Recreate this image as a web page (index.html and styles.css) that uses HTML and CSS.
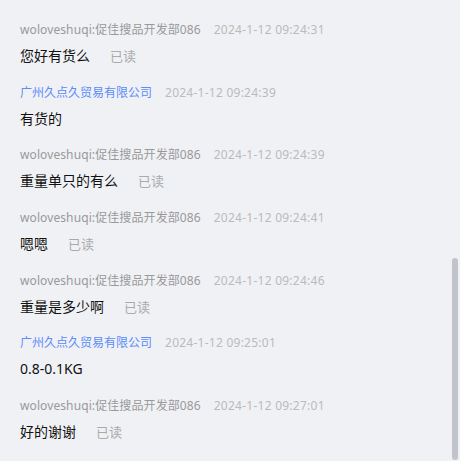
FILE: index.html
```html
<!DOCTYPE html>
<html lang="zh-CN">
<head>
    <meta charset="UTF-8">
    <meta name="viewport" content="width=device-width, initial-scale=1.0">
    <title>聊天记录</title>
    <link rel="stylesheet" href="styles.css">
</head>
<body>
    <!-- Chat history -->
    <div class="chat-list">
        <div class="msg">
            <div class="msg-head"><span class="msg-name">woloveshuqi:促佳搜品开发部086</span><span class="msg-time">2024-1-12 09:24:31</span></div>
            <div class="msg-body">您好有货么<span class="msg-read">已读</span></div>
        </div>
        <div class="msg">
            <div class="msg-head"><span class="msg-name mine">广州久点久贸易有限公司</span><span class="msg-time">2024-1-12 09:24:39</span></div>
            <div class="msg-body">有货的</div>
        </div>
        <div class="msg">
            <div class="msg-head"><span class="msg-name">woloveshuqi:促佳搜品开发部086</span><span class="msg-time">2024-1-12 09:24:39</span></div>
            <div class="msg-body">重量单只的有么<span class="msg-read">已读</span></div>
        </div>
        <div class="msg">
            <div class="msg-head"><span class="msg-name">woloveshuqi:促佳搜品开发部086</span><span class="msg-time">2024-1-12 09:24:41</span></div>
            <div class="msg-body">嗯嗯<span class="msg-read">已读</span></div>
        </div>
        <div class="msg">
            <div class="msg-head"><span class="msg-name">woloveshuqi:促佳搜品开发部086</span><span class="msg-time">2024-1-12 09:24:46</span></div>
            <div class="msg-body">重量是多少啊<span class="msg-read">已读</span></div>
        </div>
        <div class="msg">
            <div class="msg-head"><span class="msg-name mine">广州久点久贸易有限公司</span><span class="msg-time">2024-1-12 09:25:01</span></div>
            <div class="msg-body">0.8-0.1KG</div>
        </div>
        <div class="msg">
            <div class="msg-head"><span class="msg-name">woloveshuqi:促佳搜品开发部086</span><span class="msg-time">2024-1-12 09:27:01</span></div>
            <div class="msg-body">好的谢谢<span class="msg-read">已读</span></div>
        </div>
    </div>

    <!-- Scroll thumb (list is scrolled to the latest message) -->
    <div class="scroll-thumb"></div>
</body>
</html>
```
FILE: styles.css
```css
/* Basic Styling */
html, body {
    margin: 0;
    height: 100%;
}

body {
    position: relative;
    overflow: hidden;
    font-family: "Noto Sans", "Noto Sans CJK SC", sans-serif;
    background-color: #f0f1f5;
    color: #111;
}

.chat-list {
    padding: 21px 20px 0 20px;
}

/* Messages */
.msg {
    margin-bottom: 16.67px;
}

.msg-head {
    height: 18px;
    line-height: 18px;
    font-size: 12px;
    white-space: nowrap;
}

.msg-name {
    color: #999;
    letter-spacing: 0.1px;
}

.msg-name.mine {
    color: #5b8cf7;
    letter-spacing: 0;
}

.msg-time {
    color: #bbb;
    margin-left: 13px;
    letter-spacing: 0.25px;
}

.msg-body {
    margin-top: 4px;
    height: 24px;
    line-height: 25px;
    font-size: 14px;
    color: #111;
}

.msg-read {
    margin-left: 20px;
    font-size: 13px;
    color: #aaa;
}

/* Scrollbar thumb on the right edge */
.scroll-thumb {
    position: absolute;
    right: 2px;
    bottom: 1px;
    width: 6px;
    height: 202px;
    border-radius: 3px;
    background-color: #c1c4cb;
}
```
